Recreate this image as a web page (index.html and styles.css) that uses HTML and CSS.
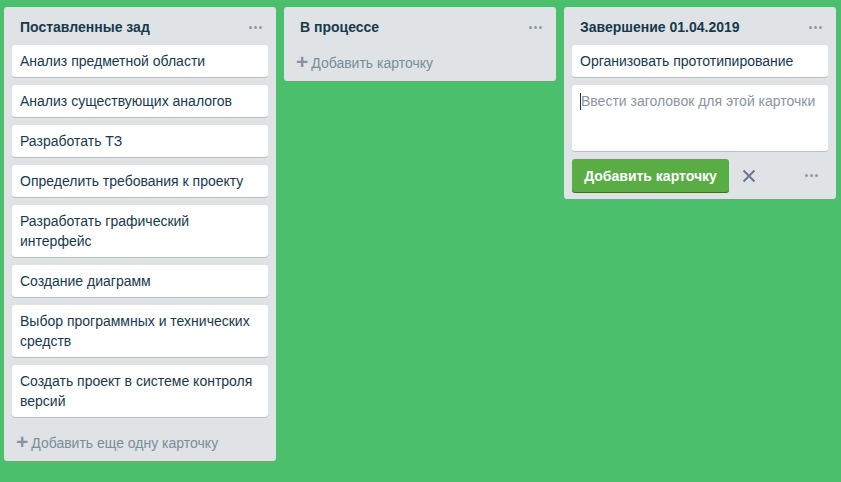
FILE: index.html
```html
<!DOCTYPE html>
<html>
<head>
<meta charset="utf-8">
<link rel="stylesheet" href="styles.css">
</head>
<body>
<div class="board">
  <div class="list">
    <div class="list-header">
      <span class="list-title">Поставленные зад</span>
      <span class="dots"><i></i><i></i><i></i></span>
    </div>
    <div class="cards">
      <div class="card">Анализ предметной области</div>
      <div class="card">Анализ существующих аналогов</div>
      <div class="card">Разработать ТЗ</div>
      <div class="card">Определить требования к проекту</div>
      <div class="card">Разработать графический интерфейс</div>
      <div class="card">Создание диаграмм</div>
      <div class="card">Выбор программных и технических средств</div>
      <div class="card">Создать проект в системе контроля версий</div>
    </div>
    <div class="composer"><span class="plus">+</span>Добавить еще одну карточку</div>
  </div>
  <div class="list">
    <div class="list-header">
      <span class="list-title">В процессе</span>
      <span class="dots"><i></i><i></i><i></i></span>
    </div>
    <div class="composer"><span class="plus">+</span>Добавить карточку</div>
  </div>
  <div class="list list-open">
    <div class="list-header">
      <span class="list-title">Завершение 01.04.2019</span>
      <span class="dots"><i></i><i></i><i></i></span>
    </div>
    <div class="cards">
      <div class="card">Организовать прототипирование</div>
      <div class="card card-edit"><span class="caret"></span><span class="placeholder">Ввести заголовок для этой карточки</span></div>
    </div>
    <div class="controls">
      <button class="add-btn">Добавить карточку</button>
      <svg class="close" width="14" height="14" viewBox="0 0 14 14"><path d="M1.5 1.5L12.5 12.5M12.5 1.5L1.5 12.5" stroke="#6b778c" stroke-width="2" fill="none"/></svg>
      <span class="dots"><i></i><i></i><i></i></span>
    </div>
  </div>
</div>
</body>
</html>
```
FILE: styles.css
```css
html, body {
  margin: 0;
  padding: 0;
}
body {
  background: #4bbf6b;
  font-family: "Liberation Sans", Arial, sans-serif;
  font-size: 14px;
  line-height: 20px;
  color: #17394d;
  width: 841px;
  height: 482px;
  overflow: hidden;
}
.board {
  display: flex;
  align-items: flex-start;
  gap: 8px;
  padding: 7px 4px 0 4px;
}
.list {
  width: 272px;
  background: #dfe3e6;
  border-radius: 3px;
  display: flex;
  flex-direction: column;
}
.list-header {
  display: flex;
  align-items: center;
  justify-content: space-between;
  padding: 10px 14px 8px 16px;
  height: 20px;
}
.list-title {
  font-weight: bold;
  color: #17394d;
}
.dots {
  display: flex;
  gap: 2px;
  align-items: center;
}
.dots i {
  display: block;
  width: 3px;
  height: 3px;
  border-radius: 50%;
  background: #8c98a6;
}
.cards {
  display: flex;
  flex-direction: column;
  gap: 8px;
  padding: 0 8px 8px 8px;
}
.card {
  background: #fff;
  border-radius: 3px;
  box-shadow: 0 1px 0 #b7c0c8;
  padding: 6px 8px;
  color: #17394d;
}
.composer {
  height: 36px;
  display: flex;
  align-items: center;
  padding: 0 12px 0 12px;
  color: #798d99;
}
.plus {
  font-size: 21px;
  font-weight: bold;
  margin-right: 3px;
  margin-top: -2px;
  color: #8794a0;
}
.card-edit {
  height: 54px;
  display: flex;
  align-items: flex-start;
  padding: 6px 8px;
}
.caret {
  width: 1px;
  height: 17px;
  background: #17394d;
  margin-top: 2px;
  margin-right: 0;
}
.placeholder {
  color: #8a959e;
}
.list-open .cards {
  padding-bottom: 8px;
}
.controls {
  display: flex;
  align-items: center;
  padding: 0 18px 7px 8px;
}
.add-btn {
  background: #5aac44;
  color: #fff;
  font-family: "Liberation Sans", Arial, sans-serif;
  font-weight: bold;
  font-size: 14px;
  border: none;
  border-radius: 3px;
  box-shadow: 0 1px 0 #3f6f21;
  height: 33px;
  padding: 0 11px;
  width: 157px;
}
.close {
  margin-left: 13px;
}
.controls .dots {
  margin-left: auto;
}
```
